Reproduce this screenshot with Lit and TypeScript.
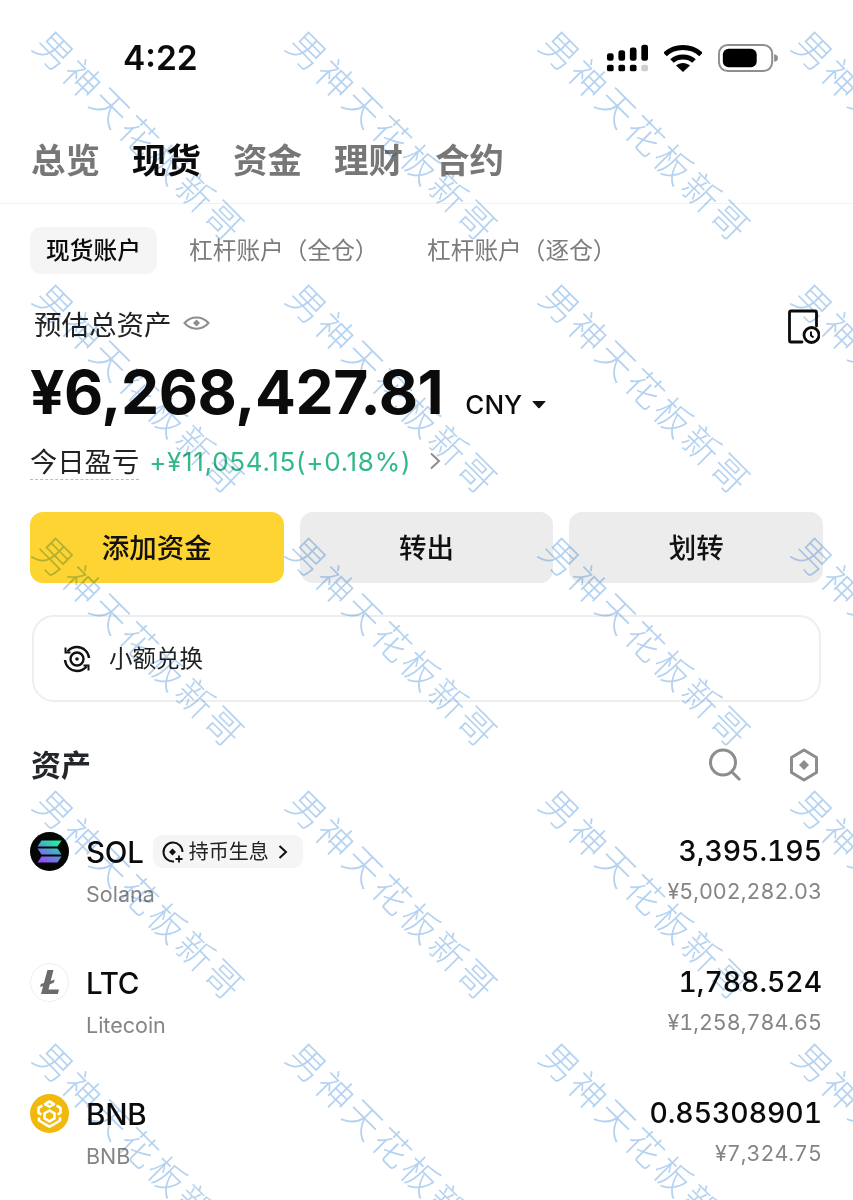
import { LitElement, html, css } from "lit";
import { customElement } from "lit/decorators.js";

const solIcon = html`<svg class="coin" viewBox="0 0 39 39">
  <defs><linearGradient id="sg" x1="0.2" y1="1" x2="0.8" y2="0"><stop offset="0" stop-color="#9945ff"/><stop offset="0.5" stop-color="#5497d5"/><stop offset="1" stop-color="#19fb9b"/></linearGradient></defs>
  <circle cx="19.500" cy="19.500" r="19.500" fill="#050505"/>
  <path d="M11.500 8.500h20l-4 6h-20zM7.500 16.500h20l4 6h-20zM11.500 24.500h20l-4 6h-20z" fill="url(#sg)"/>
</svg>`;

const ltcIcon = html`<svg class="coin" viewBox="0 0 39 39">
  <circle cx="19.500" cy="19.500" r="19" fill="#fff" stroke="#eeeeee"/>
  <path d="M17.500 7h6l-2.800 11 4-1.500-.9 3.300-4 1.500-1.300 5.200h10.500l-1.200 4.500H11l2.100-8-3 1.100.8-3 3-1.100z" fill="#6b6b6b"/>
</svg>`;

const bnbIcon = html`<svg class="coin" viewBox="0 0 39 39">
  <circle cx="19.500" cy="19.500" r="19.500" fill="#f0b90b"/>
  <g fill="none" stroke="#fff" stroke-width="2.600" stroke-linejoin="round">
    <path d="M19.500 7.500l4.500 2.600-4.500 2.600-4.500-2.600z"/>
    <path d="M12.500 11.500l-4 2.300v5l3 1.700"/>
    <path d="M26.500 11.500l4 2.300v5l-3 1.700"/>
    <path d="M19.500 16.500l5 2.900v5l-5 3-5-3v-5z"/>
    <path d="M9 23.500v3l6.500 4 4 2.200 4-2.200 6.500-4v-3"/>
  </g>
</svg>`;

const coins = [
  { icon: solIcon, sym: "SOL", name: "Solana", qty: "3,395.195", val: "¥5,002,282.03", earn: true },
  { icon: ltcIcon, sym: "LTC", name: "Litecoin", qty: "1,788.524", val: "¥1,258,784.65", earn: false },
  { icon: bnbIcon, sym: "BNB", name: "BNB", qty: "0.85308901", val: "¥7,324.75", earn: false },
];

@customElement("app-root")
export class AppRoot extends LitElement {
  static styles = css`
    :host { display: block; width: 853px; height: 1200px; position: relative; overflow: hidden; background: #fff; font-family: Inter, "Noto Sans CJK SC", sans-serif; color: #0b0b0b; }

    .status { height: 116px; display: flex; align-items: center; padding: 0 75px 0 123px; box-sizing: border-box; }
    .time { font-size: 33.500px; font-weight: 600; flex: 1; }
    .status-icons { display: flex; align-items: center; gap: 16px; }

    .tabs { display: flex; gap: 32px; padding: 0 31px 3px; height: 88px; box-sizing: border-box; align-items: center; border-bottom: 1px solid #f1f1f1; font-family: "Noto Sans CJK SC", sans-serif; font-size: 34.500px; font-weight: 700; color: #777; }
    .tabs .on { color: #0b0b0b; }

    .subtabs { display: flex; align-items: center; height: 47px; margin-top: 23px; padding-left: 30px; font-family: "Noto Sans CJK SC", sans-serif; font-size: 23.700px; color: #7c7c7c; }
    .subtabs .on { background: #f5f5f5; border-radius: 11px; height: 47px; width: 127px; box-sizing: border-box; padding-bottom: 3px; display: flex; align-items: center; justify-content: center; color: #0b0b0b; font-weight: 500; margin-right: 32px; }
    .subtabs .lev { width: 238px; }
    .subtabs .plain { padding-bottom: 3px; }

    .est { display: flex; align-items: center; height: 40px; margin-top: 30px; padding: 0 33px 2px 34px; box-sizing: border-box; font-family: "Noto Sans CJK SC", sans-serif; font-size: 27.500px; color: #222; }
    .est .eye { margin-left: 11px; }
    .est .hist { margin-left: auto; margin-top: 8px; }

    .total { display: flex; align-items: baseline; height: 74px; padding-left: 30px; margin-top: 11px; }
    .amount { font-size: 60.500px; font-weight: 700; letter-spacing: -0.4px; line-height: 74px; }
    .ccy { font-size: 26px; font-weight: 500; margin-left: 22px; }
    .tri { align-self: center; margin-left: 10px; margin-top: 24px; }

    .pnl { display: flex; align-items: center; height: 46px; margin-top: 9px; padding-left: 30px; }
    .pnl-label { font-family: "Noto Sans CJK SC", sans-serif; font-size: 27.300px; color: #222; line-height: 36px; border-bottom: 1px dashed #bcbcbc; padding-bottom: 1px; }
    .pnl-val { font-size: 26px; letter-spacing: 0.7px; color: #35b888; margin-left: 10px; }
    .pnl svg { margin-left: 18px; }

    .actions { display: flex; gap: 16px; padding: 0 30px; margin-top: 28px; }
    .btn { flex: 1; height: 71px; box-sizing: border-box; padding-bottom: 3px; border-radius: 13px; background: #ececec; display: flex; align-items: center; justify-content: center; font-family: "Noto Sans CJK SC", sans-serif; font-size: 27.500px; font-weight: 500; color: #111; }
    .btn.primary { background: #fdd431; }

    .card { margin: 32px 32px 0; height: 87px; box-sizing: border-box; border: 2px solid #eeeeee; border-radius: 22px; display: flex; align-items: center; padding-left: 29px; font-family: "Noto Sans CJK SC", sans-serif; font-size: 23.500px; color: #222; gap: 18px; }
    .card span { padding-bottom: 3px; }

    .head { display: flex; align-items: center; height: 48px; margin-top: 39px; padding: 0 34px 0 31px; }
    .head .title { font-family: "Noto Sans CJK SC", sans-serif; font-size: 30px; font-weight: 700; color: #23262b; flex: 1; padding-bottom: 4px; }
    .head .gap { width: 47px; }

    .rows { margin-top: 27px; }
    .row { height: 131px; box-sizing: border-box; padding: 16px 31px 0 30px; display: flex; }
    .coin { width: 39px; height: 39px; flex: none; margin-right: 17px; }
    .left { flex: 1; }
    .sym-line { display: flex; align-items: center; height: 39px; }
    .sym { font-size: 29.500px; font-weight: 550; letter-spacing: -0.2px; }
    .name { font-size: 21.500px; color: #858585; margin-top: 9px; line-height: 28px; }
    .badge { display: flex; align-items: center; margin-left: 9px; height: 33px; width: 150px; box-sizing: border-box; padding-left: 9px; background: #f5f5f5; border-radius: 9px; font-family: "Noto Sans CJK SC", sans-serif; font-size: 20px; color: #222; gap: 5px; }
    .badge span { padding-bottom: 2px; }
    .badge .chev { margin-left: 3px; }
    .right { text-align: right; }
    .qty { font-size: 28.300px; font-weight: 550; line-height: 39px; font-variant-numeric: tabular-nums; }
    .val { font-size: 21.500px; color: #858585; line-height: 28px; margin-top: 6px; font-variant-numeric: tabular-nums; }

    .wm-layer { position: absolute; inset: 0; pointer-events: none; mix-blend-mode: multiply; }
    .wm { position: absolute; transform-origin: 0 50%; transform: rotate(45deg); white-space: nowrap; font-family: "Noto Sans CJK SC", sans-serif; font-weight: 300; font-size: 37px; letter-spacing: 3px; color: #b5d3f1; line-height: 1; }
  `;

  private watermarks() {
    const out = [];
    for (const y of [18, 271, 524, 777, 1030]) {
      for (const x of [42, 295, 548, 801]) {
        out.push(html`<div class="wm" style="left:${x}px;top:${y}px">男神天花板新哥</div>`);
      }
    }
    return out;
  }

  render() {
    return html`
      <div class="status">
        <div class="time">4:22</div>
        <div class="status-icons">
          <svg width="42" height="30" viewBox="0 0 44 30" fill="#000">
            <rect x="1" y="10" width="7" height="8" rx="2.500"/><rect x="13" y="7" width="7" height="11" rx="2.500"/><rect x="25" y="4" width="7" height="14" rx="2.500"/><rect x="37" y="1" width="7" height="17" rx="2.500"/>
            <rect x="1" y="22" width="7" height="7" rx="2"/><rect x="13" y="22" width="7" height="7" rx="2"/><rect x="25" y="22" width="7" height="7" rx="2"/><rect x="37" y="22" width="7" height="7" rx="2" fill="#cfcfcf"/>
          </svg>
          <svg width="38" height="28" viewBox="0 0 38 28">
            <path d="M1 10.500C10.500 1 27.500 1 37 10.500" fill="none" stroke="#000" stroke-width="5"/>
            <path d="M8 17C13.500 11.500 24.500 11.500 30 17" fill="none" stroke="#000" stroke-width="5"/>
            <path d="M19 28l-7-6.500c4-3.500 10-3.500 14 0z" fill="#000"/>
          </svg>
          <svg width="60" height="30" viewBox="0 0 62 30">
            <rect x="1" y="1.500" width="55" height="27" rx="9" fill="none" stroke="#8e8e8e" stroke-width="2"/>
            <rect x="5" y="5.500" width="35" height="19" rx="6" fill="#000"/>
            <path d="M58 11c3 .5 4 2 4 4s-1 3.500-4 4z" fill="#8e8e8e"/>
          </svg>
        </div>
      </div>

      <div class="tabs">
        <span>总览</span><span class="on">现货</span><span>资金</span><span>理财</span><span>合约</span>
      </div>

      <div class="subtabs">
        <div class="on">现货账户</div>
        <div class="lev plain">杠杆账户（全仓）</div>
        <div class="plain">杠杆账户（逐仓）</div>
      </div>

      <div class="est">
        <span>预估总资产</span>
        <svg class="eye" width="27" height="18" viewBox="0 0 27 18">
          <path d="M1.500 9C8 1.500 19 1.500 25.500 9 19 16.500 8 16.500 1.500 9z" fill="none" stroke="#8d8d8d" stroke-width="2"/>
          <path d="M13.500 5.500l3.500 3.500-3.500 3.500-3.500-3.500z" fill="#8d8d8d"/>
        </svg>
        <svg class="hist" width="32" height="36" viewBox="0 0 32 36">
          <path d="M14 33H3a1.500 1.500 0 0 1-1.500-1.500V3.500A1.500 1.500 0 0 1 3 2h24a1.500 1.500 0 0 1 1.500 1.500V17" fill="none" stroke="#0b0b0b" stroke-width="2.800" stroke-linejoin="round" stroke-linecap="round"/>
          <circle cx="23.500" cy="26" r="7.500" fill="#fff" stroke="#0b0b0b" stroke-width="2.800"/>
          <path d="M23 22.500v4l2.500 2" fill="none" stroke="#0b0b0b" stroke-width="2"/>
        </svg>
      </div>

      <div class="total">
        <span class="amount">¥6,268,427.81</span>
        <span class="ccy">CNY</span>
        <svg class="tri" width="14" height="9" viewBox="0 0 14 9"><path d="M1 1h12q1 0 .3 .8L7.700 8q-.7 .7-1.400 0L.7 1.800Q0 1 1 1z" fill="#111"/></svg>
      </div>

      <div class="pnl">
        <span class="pnl-label">今日盈亏</span>
        <span class="pnl-val">+¥11,054.15(+0.18%)</span>
        <svg width="14" height="20" viewBox="0 0 14 20"><path d="M2 2.500l8 7.500-8 7.500" fill="none" stroke="#8d8d8d" stroke-width="2"/></svg>
      </div>

      <div class="actions">
        <div class="btn primary">添加资金</div>
        <div class="btn">转出</div>
        <div class="btn">划转</div>
      </div>

      <div class="card">
        <svg width="28" height="28" viewBox="0 0 28 28" fill="none" stroke="#111" stroke-width="2.400">
          <path d="M4.500 6.500C7 3.500 10 2 14 2c6.500 0 11.500 5 12 11"/>
          <path d="M23.500 21.500C21 24.500 18 26 14 26 7.500 26 2.500 21 2 15"/>
          <path d="M2.500 2.500v5h5M25.500 25.500v-5h-5" stroke-width="2"/>
          <circle cx="14" cy="14" r="6.500"/>
          <circle cx="14" cy="14" r="1.800" fill="#111" stroke="none"/>
        </svg>
        <span>小额兑换</span>
      </div>

      <div class="head">
        <div class="title">资产</div>
        <svg width="34" height="34" viewBox="0 0 34 34" fill="none" stroke="#8d8d8d" stroke-width="3">
          <circle cx="15" cy="14.500" r="12.500"/><path d="M24 24l8 8"/>
        </svg>
        <div class="gap"></div>
        <svg width="30" height="34" viewBox="0 0 30 34">
          <path d="M15 2l12.500 7.500v15L15 32 2.500 24.500v-15z" fill="none" stroke="#8d8d8d" stroke-width="3" stroke-linejoin="round"/>
          <path d="M15 12l5 5-5 5-5-5z" fill="#8d8d8d"/>
        </svg>
      </div>

      <div class="rows">
        ${coins.map(c => html`
          <div class="row">
            ${c.icon}
            <div class="left">
              <div class="sym-line">
                <span class="sym">${c.sym}</span>
                ${c.earn ? html`<div class="badge">
                  <svg width="22" height="22" viewBox="0 0 22 22" fill="none" stroke="#111" stroke-width="2">
                    <path d="M12 20.500A9.500 9.500 0 1 1 20.500 11"/>
                    <path d="M10.500 7.500l3.500 3.500-3.500 3.500-3.500-3.500z" fill="#111" stroke="none"/>
                    <path d="M17 14.500v7M13.500 18h7" stroke-width="1.800"/>
                  </svg>
                  <span>持币生息</span>
                  <svg class="chev" width="12" height="16" viewBox="0 0 12 16"><path d="M2.500 2l6.500 6-6.500 6" fill="none" stroke="#111" stroke-width="2"/></svg>
                </div>` : ""}
              </div>
              <div class="name">${c.name}</div>
            </div>
            <div class="right">
              <div class="qty">${c.qty}</div>
              <div class="val">${c.val}</div>
            </div>
          </div>
        `)}
      </div>

      <div class="wm-layer">${this.watermarks()}</div>
    `;
  }
}
